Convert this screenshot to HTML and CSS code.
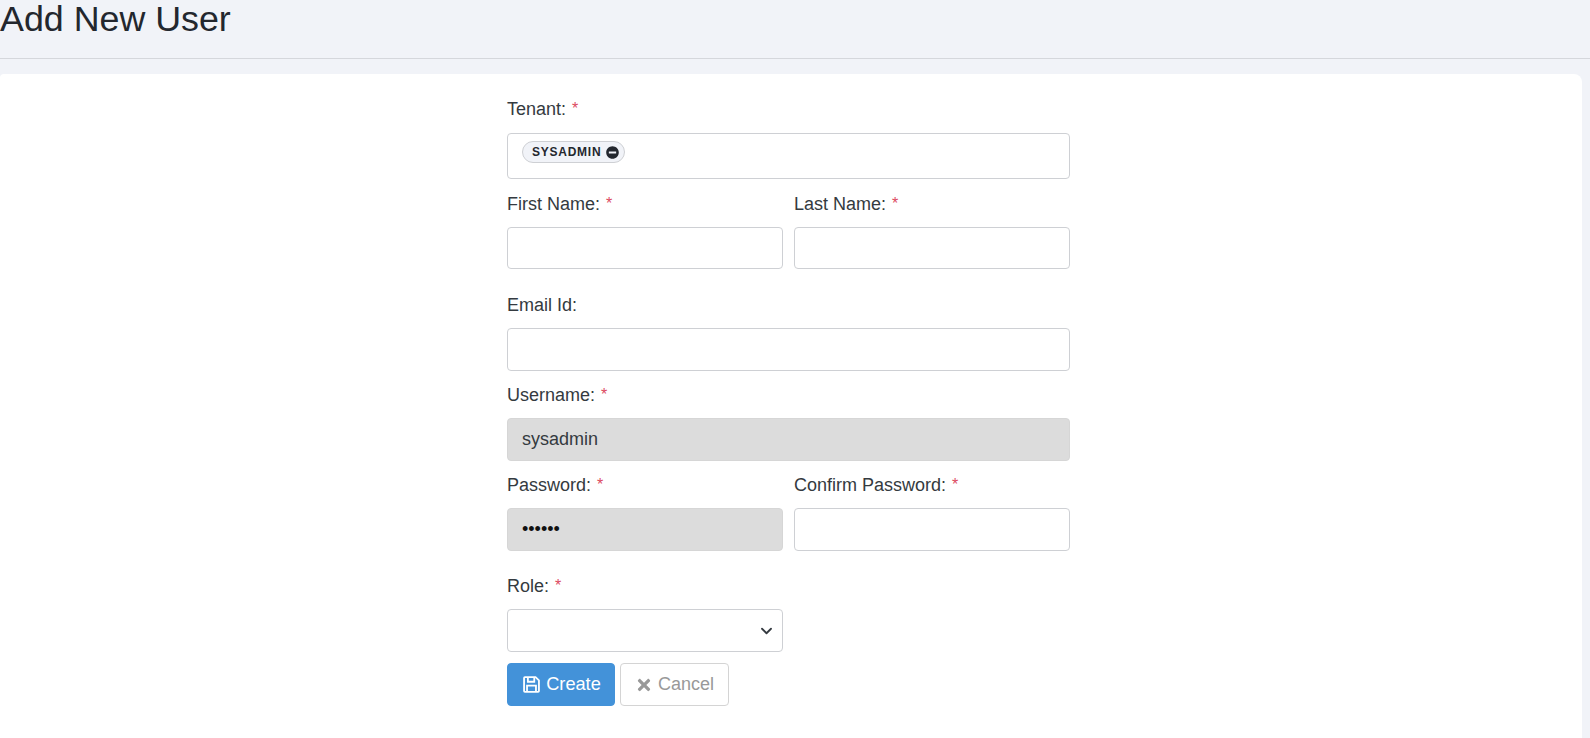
FILE: index.html
```html
<!DOCTYPE html>
<html lang="en">
<head>
    <meta charset="UTF-8">
    <meta name="viewport" content="width=device-width, initial-scale=1.0">
    <title>Add New User</title>
    <link rel="stylesheet" href="styles.css">
</head>
<body>
    <header class="page-header">
        <h1>Add New User</h1>
    </header>

    <main class="card">
        <form class="user-form">
            <div class="field gap-sm">
                <label>Tenant: <span class="req">*</span></label>
                <div class="tag-box">
                    <span class="tag">SYSADMIN
                        <svg class="tag-remove" viewBox="0 0 512 512"><path d="M256 8C119 8 8 119 8 256s111 248 248 248 248-111 248-248S393 8 256 8zM124 296c-6.6 0-12-5.4-12-12v-56c0-6.6 5.4-12 12-12h264c6.6 0 12 5.4 12 12v56c0 6.6-5.4 12-12 12H124z"/></svg>
                    </span>
                </div>
            </div>

            <div class="row gap-lg">
                <div class="field">
                    <label>First Name: <span class="req">*</span></label>
                    <input class="short" type="text">
                </div>
                <div class="field">
                    <label>Last Name: <span class="req">*</span></label>
                    <input class="short" type="text">
                </div>
            </div>

            <div class="field gap-xs">
                <label>Email Id:</label>
                <input type="text">
            </div>

            <div class="field gap-xs">
                <label>Username: <span class="req">*</span></label>
                <input class="locked" type="text" value="sysadmin" readonly>
            </div>

            <div class="row gap-md">
                <div class="field">
                    <label>Password: <span class="req">*</span></label>
                    <input class="locked" type="password" value="secret" readonly>
                </div>
                <div class="field">
                    <label>Confirm Password: <span class="req">*</span></label>
                    <input type="password">
                </div>
            </div>

            <div class="row gap-xxs">
                <div class="field">
                    <label>Role: <span class="req">*</span></label>
                    <select></select>
                </div>
            </div>

            <div class="actions">
                <button type="button" class="btn btn-primary">
                    <svg class="btn-icon icon-save" viewBox="0 0 16 16">
                        <path d="M1.8 1H11.8L15 4.2V14.2Q15 15 14.2 15H1.8Q1 15 1 14.2V1.8Q1 1 1.8 1Z"/>
                        <path d="M4.6 1V5.4H10.6V1"/>
                        <path d="M3.8 15V9H12.2V15"/>
                    </svg>
                    Create
                </button>
                <button type="button" class="btn btn-cancel">
                    <svg class="btn-icon" viewBox="0 0 352 512"><path d="M242.72 256l100.07-100.07c12.28-12.28 12.28-32.19 0-44.48l-22.24-22.24c-12.28-12.28-32.19-12.28-44.48 0L176 189.28 75.93 89.21c-12.28-12.28-32.19-12.28-44.48 0L9.21 111.45c-12.28 12.28-12.28 32.19 0 44.48L109.28 256 9.21 356.07c-12.28 12.28-12.28 32.19 0 44.48l22.24 22.24c12.28 12.28 32.2 12.28 44.48 0L176 322.72l100.07 100.07c12.28 12.28 32.2 12.28 44.48 0l22.24-22.24c12.28-12.28 12.28-32.19 0-44.48L242.72 256z"/></svg>
                    Cancel
                </button>
            </div>
        </form>
    </main>
</body>
</html>
```

FILE: styles.css
```css
html, body {
    height: 100%;
}
body {
    margin: 0;
    overflow: hidden;
    background: #f1f3f8;
    color: #343a40;
    font-family: "Liberation Sans", Arial, sans-serif;
    font-size: 18px;
}
.page-header {
    height: 58px;
    border-bottom: 1px solid #d5d7dc;
}
.page-header h1 {
    margin: 0;
    font-size: 35.8px;
    font-weight: 400;
    line-height: 39px;
    color: #23272e;
}
.card {
    margin: 15px 8px 0 0;
    height: 700px;
    padding-top: 23px;
    box-sizing: border-box;
    background: #fff;
    border-radius: 4px 8px 0 0;
}
.user-form {
    width: 563px;
    margin-left: 507px;
}
.row {
    display: grid;
    grid-template-columns: 1fr 1fr;
    column-gap: 11px;
}
.field {
    display: flex;
    flex-direction: column;
    min-width: 0;
}
.field label {
    height: 24px;
    line-height: 24px;
    margin-bottom: 11px;
}
.req {
    margin-left: 1px;
    color: #dc4a60;
    font-size: 16px;
    vertical-align: 1px;
}
.gap-sm { margin-bottom: 13px; }
.gap-xs { margin-bottom: 12px; }
.gap-md { margin-bottom: 23px; }
.gap-lg { margin-bottom: 24px; }
.gap-xxs { margin-bottom: 11px; }

input, select {
    height: 43px;
    box-sizing: border-box;
    padding: 0 14px;
    border: 1px solid #ced0d4;
    border-radius: 4px;
    background-color: #fff;
    color: #343a40;
    font-family: inherit;
    font-size: 18px;
    outline: none;
}
input.short {
    height: 42px;
}
input.locked {
    background: #dcdcdc;
    border-color: #d6d6d6;
}
input[type="password"] {
    color: #111;
}
select {
    appearance: none;
    background-image: url("data:image/svg+xml,%3csvg xmlns='http://www.w3.org/2000/svg' viewBox='0 0 16 16'%3e%3cpath fill='none' stroke='%23343a40' stroke-linecap='round' stroke-linejoin='round' stroke-width='2.4' d='M2 5l6 6 6-6'/%3e%3c/svg%3e");
    background-repeat: no-repeat;
    background-position: right 8px center;
    background-size: 15px 12px;
}
.tag-box {
    display: flex;
    align-items: flex-start;
    height: 46px;
    margin-top: 1px;
    box-sizing: border-box;
    padding: 7px 14px;
    border: 1px solid #ced0d4;
    border-radius: 4px;
}
.tag {
    display: inline-flex;
    align-items: center;
    height: 22px;
    box-sizing: border-box;
    padding: 0 5px 0 9px;
    border: 1px solid #ced0d4;
    border-radius: 11px;
    background: #f1f3f8;
    color: #23272e;
    font-size: 12px;
    font-weight: 700;
    letter-spacing: 0.75px;
}
.tag-remove {
    width: 13px;
    height: 13px;
    margin-left: 5px;
    fill: #23272e;
}
.actions {
    display: flex;
    gap: 5px;
}
.btn {
    display: inline-flex;
    align-items: center;
    justify-content: center;
    height: 43px;
    border-radius: 4px;
    font-family: inherit;
    font-size: 18px;
    cursor: pointer;
}
.btn-icon {
    width: 16px;
    height: 18px;
    margin-right: 6px;
    fill: currentColor;
}
.icon-save {
    width: 17px;
    height: 17px;
    margin-right: 6px;
    fill: none;
    stroke: currentColor;
    stroke-width: 1.7;
}
.btn-primary {
    width: 108px;
    padding: 0 0 0 2px;
    border: 1px solid #4392d9;
    background: #4392d9;
    color: #fff;
    font-size: 18.2px;
}
.btn-cancel {
    width: 109px;
    padding: 0 0 0 1px;
    border: 1px solid #d4d4d4;
    background: #fff;
    color: #999;
}
```
